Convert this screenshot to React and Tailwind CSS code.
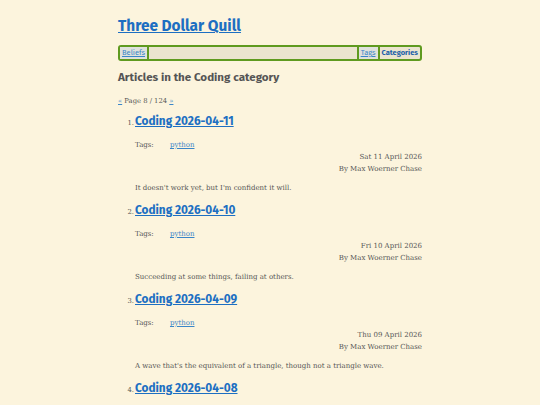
const articles = [
  { n: 1, title: "Coding 2026-04-11", date: "Sat 11 April 2026", summary: "It doesn't work yet, but I'm confident it will." },
  { n: 2, title: "Coding 2026-04-10", date: "Fri 10 April 2026", summary: "Succeeding at some things, failing at others." },
  { n: 3, title: "Coding 2026-04-09", date: "Thu 09 April 2026", summary: "A wave that's the equivalent of a triangle, though not a triangle wave." },
  { n: 4, title: "Coding 2026-04-08", date: "Wed 08 April 2026", summary: "More work." },
];

const sans = "font-['Fira_Sans','Noto_Sans',sans-serif]";
const serif = "font-['DejaVu_Serif',serif]";

export default function App() {
  return (
    <div className="min-h-screen bg-[#fcf4dd] text-[#555]">
      <div className="mx-auto w-[304px] pt-[15px]">
        <h1 className={`${sans} text-[15.4px] font-bold leading-[22px] text-[#1d6fc2] underline`}>
          <a href="#">Three Dollar Quill</a>
        </h1>

        {/* Nav */}
        <nav className={`${sans} mt-[8px] flex h-[16px] items-stretch rounded-[3px] border-2 border-[#5f9a1f] bg-[#ebe4cf] text-[7.5px] leading-[12px]`}>
          <a href="#" className="bg-[#dfe2dc] px-[2px] text-[#3a86c8] underline">Beliefs</a>
          <span className="w-[2px] bg-[#5f9a1f]" />
          <span className="flex-1" />
          <span className="w-[2px] bg-[#5f9a1f]" />
          <a href="#" className="bg-[#dfe2dc] px-[2px] text-[#3a86c8] underline">Tags</a>
          <span className="w-[2px] bg-[#5f9a1f]" />
          <a href="#" className="px-[2px] font-bold text-[#1d5fa8]">Categories</a>
        </nav>

        <h2 className={`${sans} mt-[7px] text-[11.6px] font-bold leading-[18px] text-[#555]`}>
          Articles in the Coding category
        </h2>

        <p className={`${serif} mt-[10px] text-[6.8px] leading-[10px] text-[#555]`}>
          <a href="#" className="text-[#3a86c8] underline">«</a> Page 8 / 124{" "}
          <a href="#" className="text-[#3a86c8] underline">»</a>
        </p>

        <ol className="mt-[7px]">
          {articles.map((a) => (
            <li key={a.n} className="h-[89px]">
              <div className="flex items-baseline">
                <span className={`${serif} w-[17px] text-right pr-[1px] text-[6.8px] text-[#555]`}>{a.n}.</span>
                <a href="#" className={`${sans} text-[11.8px] font-bold leading-[16px] text-[#1d6fc2] underline`}>
                  {a.title}
                </a>
              </div>
              <div className={`${serif} pl-[17px] text-[7px] leading-[12px] text-[#555]`}>
                <div className="mt-[10px] flex">
                  <span className="w-[35px]">Tags:</span>
                  <a href="#" className="text-[#3a86c8] underline">python</a>
                </div>
                <div className="text-right">{a.date}</div>
                <div className="text-right">By Max Woerner Chase</div>
                <p className="mt-[7px]">{a.summary}</p>
              </div>
            </li>
          ))}
        </ol>
      </div>
    </div>
  );
}
